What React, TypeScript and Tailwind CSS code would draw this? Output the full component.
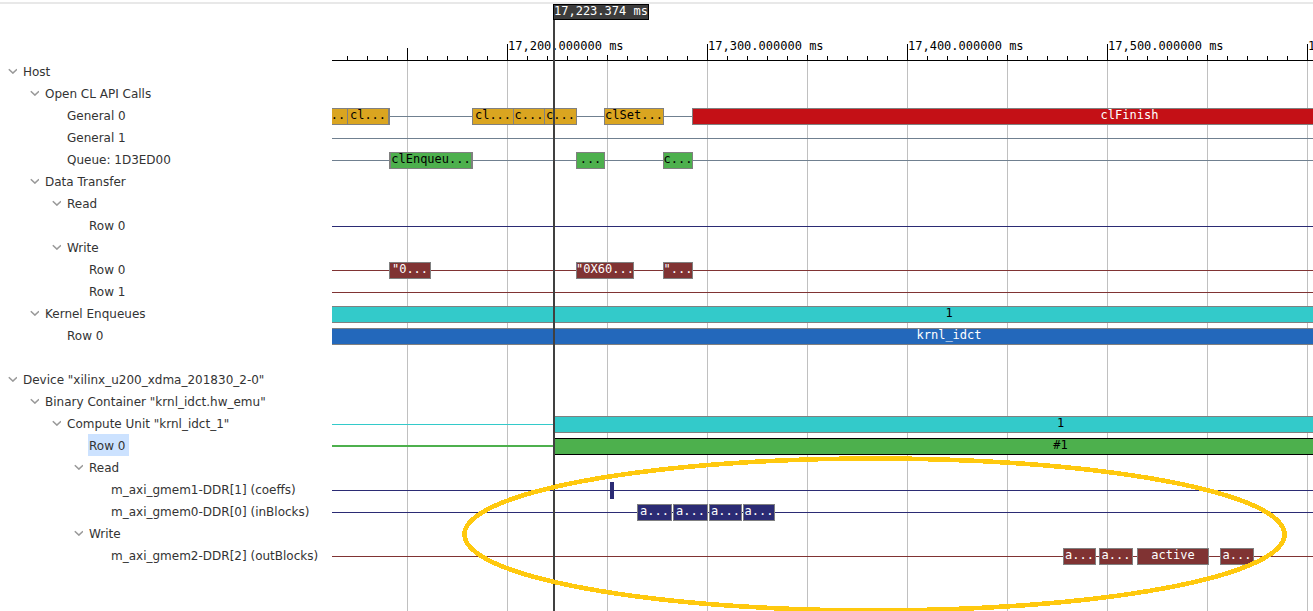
import { useEffect, useRef, useState } from "react";
import clsx from "clsx";

type Tone = "gold" | "red" | "green" | "selected" | "maroon" | "navy" | "mark" | "cyan" | "blue";
type Rail = "slate" | "navy" | "maroon" | "cyan" | "green";

/* Start and end are offsets on the time axis, two units to a millisecond. */
type Span = { start: number; end: number; label?: string; tone: Tone; joined?: "right" | "left" | "both" };

type Row = {
  id: string;
  label: string;
  depth: number;
  group?: boolean;
  rail?: Rail;
  spans?: Span[];
};

const tones: Record<Tone, string> = {
  gold: "border-[#808080] bg-[#daa520] text-black",
  red: "border-[#808080] bg-[#c41016] text-white",
  green: "border-[#808080] bg-[#4db04d] text-black",
  selected: "border-black bg-[#4db04d] text-black",
  maroon: "border-[#808080] bg-[#803333] text-white",
  navy: "border-[#808080] bg-[#2b2b74] text-white",
  mark: "border-[#2b2b74] bg-[#2b2b74]",
  cyan: "border-[#808080] bg-[#33caca] text-black",
  blue: "border-[#808080] bg-[#2368bb] text-white",
};

const rails: Record<Rail, string> = {
  slate: "mt-3 h-px bg-[#708090]",
  navy: "mt-3 h-px bg-[#2b2b74]",
  maroon: "mt-3 h-px bg-[#803333]",
  cyan: "mt-3 h-px bg-[#33caca]",
  green: "mt-[11px] h-0.5 bg-[#4db04d]",
};

const indents = ["pl-2", "pl-[30px]", "pl-[52px]", "pl-[74px]", "pl-24"];

const rows: Row[] = [
  { id: "host", label: "Host", depth: 0, group: true },
  { id: "api", label: "Open CL API Calls", depth: 1, group: true },
  {
    id: "general0",
    label: "General 0",
    depth: 2,
    rail: "slate",
    spans: [
      { start: -4, end: 16, label: "..", tone: "gold" },
      { start: 15, end: 58, label: "cl...", tone: "gold", joined: "right" },
      { start: 140, end: 182, label: "cl...", tone: "gold" },
      { start: 181, end: 213, label: "c...", tone: "gold" },
      { start: 212, end: 245, label: "c...", tone: "gold" },
      { start: 272, end: 332, label: "clSet...", tone: "gold" },
      { start: 360, end: 1235, label: "clFinish", tone: "red" },
    ],
  },
  { id: "general1", label: "General 1", depth: 2, rail: "slate" },
  {
    id: "queue",
    label: "Queue: 1D3ED00",
    depth: 2,
    rail: "slate",
    spans: [
      { start: 57, end: 141, label: "clEnqueu...", tone: "green", joined: "both" },
      { start: 244, end: 273, label: "...", tone: "green" },
      { start: 331, end: 361, label: "c...", tone: "green" },
    ],
  },
  { id: "transfer", label: "Data Transfer", depth: 1, group: true },
  { id: "hostRead", label: "Read", depth: 2, group: true },
  { id: "hostRead0", label: "Row 0", depth: 3, rail: "navy" },
  { id: "hostWrite", label: "Write", depth: 2, group: true },
  {
    id: "hostWrite0",
    label: "Row 0",
    depth: 3,
    rail: "maroon",
    spans: [
      { start: 57, end: 99, label: '"0...', tone: "maroon" },
      { start: 244, end: 302, label: '"0X60...', tone: "maroon" },
      { start: 331, end: 361, label: '"...', tone: "maroon" },
    ],
  },
  { id: "hostWrite1", label: "Row 1", depth: 3, rail: "maroon" },
  {
    id: "enqueues",
    label: "Kernel Enqueues",
    depth: 1,
    group: true,
    spans: [{ start: -1, end: 1235, label: "1", tone: "cyan" }],
  },
  {
    id: "enqueues0",
    label: "Row 0",
    depth: 2,
    spans: [{ start: -1, end: 1235, label: "krnl_idct", tone: "blue" }],
  },
  { id: "gap", label: "", depth: 0 },
  { id: "device", label: 'Device "xilinx_u200_xdma_201830_2-0"', depth: 0, group: true },
  { id: "container", label: 'Binary Container "krnl_idct.hw_emu"', depth: 1, group: true },
  {
    id: "unit",
    label: 'Compute Unit "krnl_idct_1"',
    depth: 2,
    group: true,
    rail: "cyan",
    spans: [{ start: 222, end: 1235, label: "1", tone: "cyan" }],
  },
  {
    id: "unit0",
    label: "Row 0",
    depth: 3,
    rail: "green",
    spans: [{ start: 222, end: 1235, label: "#1", tone: "selected" }],
  },
  { id: "unitRead", label: "Read", depth: 3, group: true },
  {
    id: "gmem1",
    label: "m_axi_gmem1-DDR[1] (coeffs)",
    depth: 4,
    rail: "navy",
    spans: [{ start: 278, end: 282, tone: "mark" }],
  },
  {
    id: "gmem0",
    label: "m_axi_gmem0-DDR[0] (inBlocks)",
    depth: 4,
    rail: "navy",
    spans: [
      { start: 305, end: 340, label: "a...", tone: "navy" },
      { start: 341, end: 376, label: "a...", tone: "navy" },
      { start: 377, end: 410, label: "a...", tone: "navy" },
      { start: 411, end: 443, label: "a...", tone: "navy" },
    ],
  },
  { id: "unitWrite", label: "Write", depth: 3, group: true },
  {
    id: "gmem2",
    label: "m_axi_gmem2-DDR[2] (outBlocks)",
    depth: 4,
    rail: "maroon",
    spans: [
      { start: 731, end: 764, label: "a...", tone: "maroon" },
      { start: 767, end: 801, label: "a...", tone: "maroon" },
      { start: 805, end: 877, label: "active", tone: "maroon" },
      { start: 888, end: 922, label: "a...", tone: "maroon" },
    ],
  },
];

function visibleRows(closed: Set<string>): Row[] {
  const shown: Row[] = [];
  let hiddenBelow = Infinity;
  for (const row of rows) {
    if (row.id === "gap" || row.depth <= hiddenBelow) hiddenBelow = Infinity;
    if (hiddenBelow !== Infinity) continue;
    shown.push(row);
    if (closed.has(row.id)) hiddenBelow = row.depth;
  }
  return shown;
}

function Chevron({ open }: { open: boolean }) {
  return (
    <svg viewBox="0 0 9 6" className={clsx("h-1.5 w-[9px] shrink-0", !open && "-rotate-90")} aria-hidden="true">
      <path d="M0.8 1.2 L4.9 5.1 L9 1.2" fill="none" stroke="#999999" strokeWidth="1.5" />
    </svg>
  );
}

function TreeRow({
  row,
  open,
  selected,
  onPress,
}: {
  row: Row;
  open: boolean;
  selected: boolean;
  onPress: () => void;
}) {
  return (
    <li className={clsx("flex h-[22px] items-center", indents[row.depth])}>
      {row.label && (
        <button
          type="button"
          aria-expanded={row.group ? open : undefined}
          onClick={onPress}
          className="flex h-full items-center gap-[5px] whitespace-nowrap"
        >
          {row.group ? <Chevron open={open} /> : <span className="w-[9px]" />}
          <span className={clsx("pt-0.5 pr-1 pl-px leading-5", selected && "bg-[#cce2ff]")}>{row.label}</span>
        </button>
      )}
    </li>
  );
}

function Lane({ row }: { row: Row }) {
  return (
    <li className="relative h-[22px]">
      {row.rail && <div className={clsx("absolute inset-x-0 top-0", rails[row.rail])} />}
      {row.spans?.map((span) => (
        <div
          key={span.start}
          className={clsx(
            "absolute top-1 flex h-[17px] justify-center border leading-3 whitespace-nowrap",
            tones[span.tone],
            (span.joined === "right" || span.joined === "both") && "border-r-2",
            (span.joined === "left" || span.joined === "both") && "border-l-2",
          )}
          style={{ left: span.start, width: span.end - span.start }}
        >
          {span.label}
        </div>
      ))}
    </li>
  );
}

function tickTop(x: number) {
  if (x === 75) return 48;
  if ((x - 75) % 200 === 100) return 44;
  if ((x - 75) % 100 === 0) return 55;
  return 56;
}

function Ruler({ width }: { width: number }) {
  const ticks: number[] = [];
  for (let x = 15; x < width; x += 20) ticks.push(x);
  const labels = ticks.filter((x) => tickTop(x) === 44);
  return (
    <div className="relative h-[61px]">
      <svg className="absolute inset-0 h-full w-full" shapeRendering="crispEdges" aria-hidden="true">
        {ticks.map((x) => (
          <rect key={x} x={x} y={tickTop(x)} width="1" height={60 - tickTop(x)} />
        ))}
        <rect x="0" y="60" width="100%" height="1" />
      </svg>
      {labels.map((x) => (
        <span key={x} className="absolute top-10 leading-3 whitespace-nowrap" style={{ left: x + 1 }}>
          {`${(17200 + (x - 175) / 2).toLocaleString("en-US", { minimumFractionDigits: 6 })} ms`}
        </span>
      ))}
    </div>
  );
}

function Timeline({ shown }: { shown: Row[] }) {
  const box = useRef<HTMLElement>(null);
  const [width, setWidth] = useState(0);
  useEffect(() => {
    const measure = () => setWidth(box.current?.clientWidth ?? 0);
    measure();
    window.addEventListener("resize", measure);
    return () => window.removeEventListener("resize", measure);
  }, []);

  const gridLines: number[] = [];
  for (let x = 75; x < width; x += 100) gridLines.push(x);

  return (
    <section
      ref={box}
      aria-label="Timeline"
      className="relative min-w-0 flex-1 overflow-hidden font-['DejaVu_Sans_Mono',monospace] text-xs text-black"
    >
      <svg className="absolute inset-0 h-full w-full" shapeRendering="crispEdges" aria-hidden="true">
        {gridLines.map((x) => (
          <rect key={x} x={x} y="61" width="1" height="100%" fill="#c0c0c0" />
        ))}
      </svg>
      <Ruler width={width} />
      <ul className="-mt-px">
        {shown.map((row) => (
          <Lane key={row.id} row={row} />
        ))}
      </ul>
      <div className="absolute top-5 bottom-0 left-[221px] w-0.5 bg-[#404040]" />
      <div className="absolute top-1 left-[221px] border border-black bg-[#3c3c3c] pb-0.5 leading-3 whitespace-nowrap text-white">
        17,223.374 ms
      </div>
      <svg
        className="pointer-events-none absolute inset-0 h-full w-full"
        shapeRendering="crispEdges"
        aria-hidden="true"
      >
        <ellipse cx="542.5" cy="534.5" rx="410" ry="76" fill="none" stroke="#ffc90e" strokeWidth="4.6" />
      </svg>
    </section>
  );
}

export default function App() {
  const [closed, setClosed] = useState<Set<string>>(new Set());
  const [selected, setSelected] = useState("unit0");
  const shown = visibleRows(closed);

  const press = (row: Row) => {
    if (!row.group) {
      setSelected(row.id);
      return;
    }
    const next = new Set(closed);
    if (!next.delete(row.id)) next.add(row.id);
    setClosed(next);
  };

  return (
    <main className="relative flex min-h-screen bg-white">
      <div className="absolute inset-x-0 top-0.5 h-0.5 bg-[#e8e8e8]" />
      <nav
        aria-label="Trace rows"
        className="w-[332px] shrink-0 pt-[60px] font-['DejaVu_Sans',sans-serif] text-xs text-[#333333]"
      >
        <ul>
          {shown.map((row) => (
            <TreeRow
              key={row.id}
              row={row}
              open={!closed.has(row.id)}
              selected={row.id === selected}
              onPress={() => press(row)}
            />
          ))}
        </ul>
      </nav>
      <Timeline shown={shown} />
    </main>
  );
}
